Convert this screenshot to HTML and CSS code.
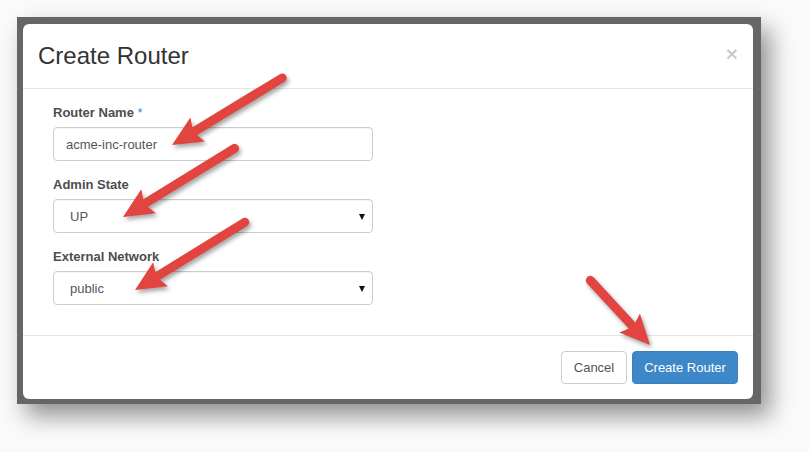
FILE: index.html
```html
<!DOCTYPE html>
<html lang="en">
<head>
    <meta charset="UTF-8">
    <title>Create Router</title>
    <link rel="stylesheet" href="styles.css">
</head>
<body>
    <div class="frame">
        <div class="modal">
            <div class="modal-header">
                <h4 class="modal-title">Create Router</h4>
                <button class="close" type="button">&times;</button>
            </div>
            <div class="modal-body">
                <div class="form-group">
                    <label for="name">Router Name <span class="req">*</span></label>
                    <input class="form-control" type="text" id="name" value="acme-inc-router">
                </div>
                <div class="form-group">
                    <label for="state">Admin State</label>
                    <div class="select-wrap">
                        <select class="form-control" id="state">
                            <option>UP</option>
                            <option>DOWN</option>
                        </select>
                    </div>
                </div>
                <div class="form-group">
                    <label for="network">External Network</label>
                    <div class="select-wrap">
                        <select class="form-control" id="network">
                            <option>public</option>
                        </select>
                    </div>
                </div>
            </div>
            <div class="modal-footer">
                <button class="btn btn-default" type="button">Cancel</button>
                <button class="btn btn-primary" type="button">Create Router</button>
            </div>
        </div>
    </div>

    <!-- annotation arrows drawn over the screenshot -->
    <svg class="arrows" width="809" height="452" viewBox="0 0 809 452">
        <defs>
            <g id="arrow">
                <polygon points="0,0 30,-14 25,0 30,14" />
            </g>
        </defs>
        <g transform="translate(172 145) rotate(-31.3)">
            <line x1="20" y1="0" x2="129" y2="0" />
            <use href="#arrow" />
        </g>
        <g transform="translate(123 217) rotate(-31.6)">
            <line x1="20" y1="0" x2="131" y2="0" />
            <use href="#arrow" />
        </g>
        <g transform="translate(135 290) rotate(-31.7)">
            <line x1="20" y1="0" x2="129" y2="0" />
            <use href="#arrow" />
        </g>
        <g transform="translate(650 345) rotate(-132.7)">
            <line x1="20" y1="0" x2="88" y2="0" />
            <use href="#arrow" />
        </g>
    </svg>
</body>
</html>
```

FILE: styles.css
```css
* {
    box-sizing: border-box;
}

body {
    margin: 0;
    background: #fafafa;
    font-family: 'Liberation Sans', Arial, sans-serif;
    font-size: 13px;
    color: #333;
    width: 809px;
    height: 452px;
    overflow: hidden;
    position: relative;
}

.frame {
    margin: 17px 0 0 17px;
    width: 744px;
    height: 387px;
    padding: 7px 8px 5px 6px;
    background: #666;
    box-shadow: 9px 12px 22px rgba(0, 0, 0, 0.42);
}

.modal {
    background: #fff;
    border-radius: 6px;
    height: 375px;
    display: flex;
    flex-direction: column;
}

.modal-header {
    display: flex;
    justify-content: space-between;
    align-items: flex-start;
    padding: 15px;
    border-bottom: 1px solid #e5e5e5;
}

.modal-title {
    margin: 0;
    font-size: 24px;
    font-weight: normal;
    line-height: 34px;
    color: #333;
}

.close {
    border: none;
    background: none;
    padding: 0;
    margin-top: 4px;
    font-family: 'Liberation Sans', Arial, sans-serif;
    font-size: 21px;
    font-weight: bold;
    line-height: 1;
    color: #000;
    opacity: 0.2;
}

.modal-body {
    padding: 15px 30px;
    flex: 1;
}

.form-group {
    margin-bottom: 15px;
    width: 320px;
}

.form-group label {
    display: block;
    font-weight: bold;
    line-height: 18px;
    margin-bottom: 5px;
    color: #4d4d4d;
}

.req {
    color: #4a8ac4;
    font-weight: normal;
}

.form-control {
    display: block;
    width: 100%;
    height: 34px;
    padding: 6px 12px;
    font-family: 'Liberation Sans', Arial, sans-serif;
    font-size: 13px;
    color: #555;
    background: #fff;
    border: 1px solid #ccc;
    border-radius: 4px;
    box-shadow: inset 0 1px 1px rgba(0, 0, 0, 0.04);
}

select.form-control {
    appearance: none;
    -webkit-appearance: none;
    padding-left: 16px;
}

.select-wrap {
    position: relative;
}

.select-wrap::after {
    content: '';
    position: absolute;
    right: 8px;
    top: 15px;
    border-left: 3.5px solid transparent;
    border-right: 3.5px solid transparent;
    border-top: 6px solid #111;
    pointer-events: none;
}

.modal-footer {
    display: flex;
    justify-content: flex-end;
    gap: 5px;
    padding: 15px;
    border-top: 1px solid #e5e5e5;
}

.btn {
    height: 33px;
    padding: 0;
    font-family: 'Liberation Sans', Arial, sans-serif;
    font-size: 13px;
    white-space: nowrap;
    text-align: center;
    border-radius: 4px;
    border: 1px solid transparent;
}

.btn-default {
    width: 66px;
    background: #fff;
    border-color: #ccc;
    color: #555;
}

.btn-primary {
    width: 106px;
    background: #3e87c8;
    border-color: #3a80bf;
    color: #fff;
}

.arrows {
    position: absolute;
    left: 0;
    top: 0;
    pointer-events: none;
    filter: drop-shadow(2px 3px 2px rgba(0, 0, 0, 0.35));
}

.arrows line {
    stroke: #e2443f;
    stroke-width: 9;
    stroke-linecap: round;
}

.arrows polygon {
    fill: #e2443f;
}
```
